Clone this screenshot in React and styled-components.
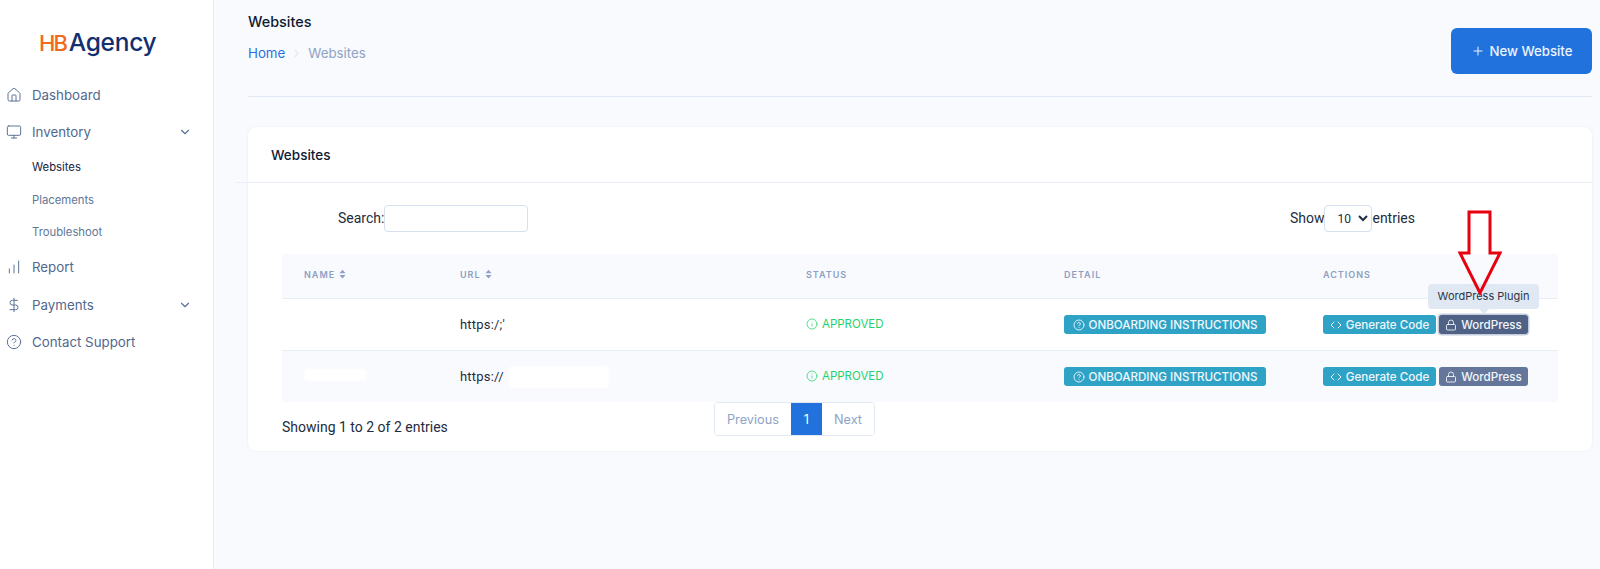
import React from 'react'
import styled, { createGlobalStyle } from 'styled-components'
import {
  House,
  Monitor,
  ChartNoAxesColumnIncreasing,
  DollarSign,
  CircleHelp,
  ChevronDown,
  ChevronRight,
  Plus,
  Code,
  Lock,
  Info,
} from 'lucide-react'

const GlobalStyle = createGlobalStyle`
  html, body { margin: 0; padding: 0; height: 100%; }
  body {
    background: #f9fafe;
    font-family: Inter, "Liberation Sans", sans-serif;
    overflow: hidden;
  }
`

const rows = [
  { id: 1, url: "https:/;'", hidden: false, focused: true },
  { id: 2, url: 'https://', hidden: true, focused: false },
]

function SortArrows() {
  return (
    <SortIcon viewBox="0 0 8 11" aria-hidden="true">
      <path d="M4 0.5 7.5 4.5H0.5Z" />
      <path d="M4 10.5 0.5 6.5H7.5Z" />
    </SortIcon>
  )
}

export default function App() {
  return (
    <Page>
      <GlobalStyle />
      <Sidebar>
        <Logo>
          <LogoMark>HB</LogoMark>
          <LogoName>Agency</LogoName>
        </Logo>
        <Nav>
          <NavItem><House size={16} strokeWidth={1.5} />Dashboard</NavItem>
          <NavItem>
            <Monitor size={16} strokeWidth={1.5} />Inventory
            <NavChevron><ChevronDown size={14} strokeWidth={2} /></NavChevron>
          </NavItem>
          <SubItem $active>Websites</SubItem>
          <SubItem>Placements</SubItem>
          <SubItem>Troubleshoot</SubItem>
          <NavItem><ChartNoAxesColumnIncreasing size={16} strokeWidth={1.5} />Report</NavItem>
          <NavItem><DollarSign size={16} strokeWidth={1.5} />Payments
            <NavChevron><ChevronDown size={14} strokeWidth={2} /></NavChevron>
          </NavItem>
          <NavItem><CircleHelp size={16} strokeWidth={1.5} />Contact Support</NavItem>
        </Nav>
      </Sidebar>

      <Main>
        <Header>
          <div>
            <PageTitle>Websites</PageTitle>
            <Breadcrumb>
              <Crumb href="#">Home</Crumb>
              <ChevronRight size={13} strokeWidth={1.5} color="#c9d5e6" />
              <span>Websites</span>
            </Breadcrumb>
          </div>
          <NewButton><Plus size={14} strokeWidth={1.75} />New Website</NewButton>
        </Header>

        <Card>
          <CardHeader>Websites</CardHeader>
          <CardBody>
            <Filters>
              <FilterLabel>Search:<SearchInput type="text" /></FilterLabel>
              <FilterLabel>
                Show
                <EntriesSelect defaultValue="10">
                  <option>10</option>
                  <option>25</option>
                  <option>50</option>
                </EntriesSelect>
                entries
              </FilterLabel>
            </Filters>

            <Table>
              <colgroup>
                <col style={{ width: 156 }} />
                <col style={{ width: 346 }} />
                <col style={{ width: 258 }} />
                <col style={{ width: 259 }} />
                <col />
              </colgroup>
              <thead>
                <tr>
                  <HeadCell>Name <SortArrows /></HeadCell>
                  <HeadCell>URL <SortArrows /></HeadCell>
                  <HeadCell>Status</HeadCell>
                  <HeadCell>Detail</HeadCell>
                  <HeadCell>Actions</HeadCell>
                </tr>
              </thead>
              <tbody>
                {rows.map((row) => (
                  <Row key={row.id} $striped={row.hidden}>
                    <Cell>{row.hidden && <Redaction $width={63} $height={12} />}</Cell>
                    <Cell>
                      <UrlWrap>
                        {row.url}
                        {row.hidden && <Redaction $width={100} $height={22} $gap={5} />}
                      </UrlWrap>
                    </Cell>
                    <Cell>
                      <Approved><Info size={12} strokeWidth={1.5} />APPROVED</Approved>
                    </Cell>
                    <Cell>
                      <Badge $wide><CircleHelp size={12} strokeWidth={1.75} />ONBOARDING INSTRUCTIONS</Badge>
                    </Cell>
                    <Cell>
                      <Actions>
                        <Badge><Code size={12} strokeWidth={2} />Generate Code</Badge>
                        <TooltipAnchor>
                          <Badge $dark $focused={row.focused}><Lock size={12} strokeWidth={1.75} />WordPress</Badge>
                          {row.focused && <Tooltip>WordPress Plugin</Tooltip>}
                          {row.focused && (
                            <Arrow viewBox="0 0 48 88" aria-hidden="true">
                              <path d="M13 2H34V43H44L24 83 4 43H13Z" />
                            </Arrow>
                          )}
                        </TooltipAnchor>
                      </Actions>
                    </Cell>
                  </Row>
                ))}
              </tbody>
            </Table>

            <Footer>
              <EntriesInfo>Showing 1 to 2 of 2 entries</EntriesInfo>
              <Pagination>
                <PageLink>Previous</PageLink>
                <PageLink $current>1</PageLink>
                <PageLink>Next</PageLink>
              </Pagination>
            </Footer>
          </CardBody>
        </Card>
      </Main>
    </Page>
  )
}

const Page = styled.div`
  display: flex;
  min-height: 569px;
`

const Sidebar = styled.aside`
  width: 213px;
  flex: none;
  background: #fff;
  border-right: 1px solid #e9eef6;
`

const Logo = styled.div`
  display: flex;
  align-items: baseline;
  padding: 24px 0 0 39px;
  box-sizing: border-box;
  height: 76px;
  line-height: 36px;
`

const LogoMark = styled.span`
  font-size: 22px;
  font-weight: 500;
  letter-spacing: -2px;
  color: #f26a1b;
  margin-right: 3px;
`

const LogoName = styled.span`
  font-size: 24.5px;
  font-weight: 500;
  letter-spacing: -0.3px;
  color: #12306f;
`

const Nav = styled.nav`
  display: flex;
  flex-direction: column;
`

const NavItem = styled.div`
  display: flex;
  align-items: center;
  gap: 10px;
  height: 37.5px;
  padding-left: 6px;
  font-size: 13.3px;
  color: #51698f;
  svg { flex: none; color: #5c7397; }
`

const NavChevron = styled.span`
  display: flex;
  margin-left: auto;
  margin-right: 21px;
`

const SubItem = styled.div`
  display: flex;
  align-items: center;
  height: 32.5px;
  padding-left: 32px;
  font-size: 11.3px;
  color: ${(p) => (p.$active ? '#14233f' : '#607799')};
`

const Main = styled.main`
  flex: 1;
  min-width: 0;
  padding: 0 8px 0 34px;
`

const Header = styled.header`
  display: flex;
  align-items: flex-start;
  justify-content: space-between;
  height: 97px;
  box-sizing: border-box;
  border-bottom: 1px solid #dfe8f4;
`

const PageTitle = styled.h1`
  margin: 13px 0 0;
  font-size: 14.4px;
  line-height: 17px;
  font-weight: 500;
  color: #0e1a33;
`

const Breadcrumb = styled.div`
  display: flex;
  align-items: center;
  gap: 5px;
  margin-top: 14px;
  font-size: 13.3px;
  line-height: 18px;
  color: #8ea3c5;
`

const Crumb = styled.a`
  color: #2673e0;
  text-decoration: none;
`

const NewButton = styled.button`
  display: flex;
  align-items: center;
  justify-content: center;
  gap: 5px;
  width: 141px;
  height: 46px;
  margin: 28px 0 0 0;
  border: none;
  border-radius: 6px;
  background: #2172dd;
  color: #eef4fd;
  font-family: inherit;
  font-size: 13.2px;
  font-weight: 500;
`

const Card = styled.section`
  margin-top: 30px;
  height: 324px;
  background: #fff;
  border-radius: 8px;
  box-shadow: 0 0 2px rgba(150, 170, 200, 0.25);
`

const CardHeader = styled.div`
  height: 56px;
  box-sizing: border-box;
  margin-left: -12px;
  padding-left: 35px;
  display: flex;
  align-items: center;
  font-size: 13.5px;
  font-weight: 500;
  color: #0e1a33;
  border-bottom: 1px solid #e9eef6;
`

const CardBody = styled.div`
  padding: 22px 34px 0;
  font-family: Roboto, "Liberation Sans", sans-serif;
  font-size: 14px;
  color: #222c3e;
`

const Filters = styled.div`
  display: flex;
  justify-content: space-between;
  padding: 0 143px 0 56px;
  height: 49px;
`

const FilterLabel = styled.label`
  display: flex;
  align-items: flex-start;
  line-height: 27px;
`

const SearchInput = styled.input`
  width: 144px;
  height: 27px;
  padding: 0 8px;
  box-sizing: border-box;
  border: 1px solid #d6e0ee;
  border-radius: 4px;
  background: #fff;
`

const EntriesSelect = styled.select`
  width: 48px;
  height: 27px;
  padding: 0 2px 0 8px;
  box-sizing: border-box;
  border: 1px solid #d6e0ee;
  border-radius: 4px;
  background: #fff;
  font-family: inherit;
  font-size: 12px;
  color: #222c3e;
`

const Table = styled.table`
  width: 1276px;
  border-collapse: collapse;
  table-layout: fixed;
`

const HeadCell = styled.th`
  height: 41px;
  padding: 0 0 3px 22px;
  text-align: left;
  background: #f9fafe;
  border-bottom: 1px solid #e9eef6;
  font-family: Inter, "Liberation Sans", sans-serif;
  font-size: 9px;
  font-weight: 600;
  letter-spacing: 1px;
  text-transform: uppercase;
  color: #8ba0c2;
`

const SortIcon = styled.svg`
  width: 7px;
  height: 10px;
  margin-left: 1px;
  vertical-align: -1px;
  fill: #8ba0c2;
`

const Row = styled.tr`
  background: ${(p) => (p.$striped ? '#f9fafe' : '#fff')};
  & + & { border-top: 1px solid #e9eef6; }
`

const Cell = styled.td`
  height: 51px;
  padding: 0 0 0 22px;
  font-size: 13px;
  letter-spacing: 0.2px;
  color: #1f2a3d;
  vertical-align: middle;
`

const UrlWrap = styled.span`
  display: inline-flex;
  align-items: center;
`

const Redaction = styled.span`
  display: inline-block;
  width: ${(p) => p.$width}px;
  height: ${(p) => p.$height}px;
  margin-left: ${(p) => p.$gap || 0}px;
  border-radius: 4px;
  background: #fff;
  filter: blur(1px);
`

const Approved = styled.span`
  display: inline-flex;
  align-items: center;
  gap: 4px;
  font-family: Inter, "Liberation Sans", sans-serif;
  font-size: 11.5px;
  letter-spacing: 0;
  color: #1fd26e;
`

const Badge = styled.span`
  display: inline-flex;
  align-items: center;
  justify-content: center;
  gap: 4px;
  box-sizing: border-box;
  width: ${(p) => (p.$wide ? '202px' : p.$dark ? '89px' : '113px')};
  height: 19px;
  border-radius: 3px;
  font-family: Inter, "Liberation Sans", sans-serif;
  font-size: 11.6px;
  font-weight: 500;
  letter-spacing: 0;
  white-space: nowrap;
  color: #f1f6fb;
  background: ${(p) => (p.$dark ? (p.$focused ? '#4f6285' : '#64779a') : '#2fa3c6')};
  box-shadow: ${(p) => (p.$focused ? '0 0 0 1.5px #c3cddd' : 'none')};
`

const Actions = styled.div`
  display: flex;
  align-items: center;
  gap: 3px;
`

const TooltipAnchor = styled.div`
  position: relative;
  display: flex;
`

const Tooltip = styled.div`
  position: absolute;
  left: -11px;
  bottom: 25px;
  width: 111px;
  height: 25px;
  border-radius: 4px;
  background: #e0e8f3;
  font-family: Inter, "Liberation Sans", sans-serif;
  font-size: 11px;
  line-height: 25px;
  letter-spacing: 0;
  text-align: center;
  color: #2b364b;
  &::after {
    content: '';
    position: absolute;
    left: 50%;
    bottom: -5px;
    margin-left: -5px;
    border-left: 5px solid transparent;
    border-right: 5px solid transparent;
    border-top: 5px solid #e0e8f3;
  }
`

const Arrow = styled.svg`
  position: absolute;
  left: 17px;
  top: -105px;
  width: 48px;
  height: 88px;
  fill: none;
  stroke: #e8000f;
  stroke-width: 3;
`

const Footer = styled.div`
  display: grid;
  grid-template-columns: 432px auto;
  justify-content: start;
  align-items: start;
  font-size: 14px;
  color: #222c3e;
`

const EntriesInfo = styled.span`
  margin-top: 17px;
  line-height: 17px;
`

const Pagination = styled.div`
  display: flex;
  width: fit-content;
  height: 34px;
  border: 1px solid #e2e9f3;
  border-radius: 4px;
  box-sizing: border-box;
  overflow: hidden;
`

const PageLink = styled.span`
  display: flex;
  align-items: center;
  padding: 0 ${(p) => (p.$current ? '13px' : '12px')};
  font-family: Inter, "Liberation Sans", sans-serif;
  font-size: 12.7px;
  color: ${(p) => (p.$current ? '#fff' : '#8ea3c5')};
  background: ${(p) => (p.$current ? '#2172dd' : '#fff')};
`
